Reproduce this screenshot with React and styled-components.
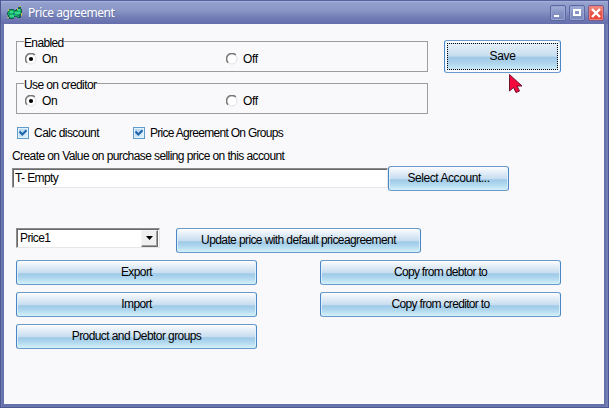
import React from 'react';
import styled, { createGlobalStyle } from 'styled-components';

const GlobalStyle = createGlobalStyle`
  * { box-sizing: border-box; }
  body { margin: 0; overflow: hidden; }
`;

const Window = styled.div`
  position: relative;
  display: flex;
  flex-direction: column;
  width: 609px;
  height: 408px;
  padding: 0 4px 3px 3px;
  border: solid #4d5790;
  border-width: 0 1px 1px;
  background: #6771ac;
  box-shadow: inset 1px 0 #737db5, inset -2px 0 #7580b7, inset 0 -1px #6c76b0;
  font-family: "Liberation Sans", Arial, sans-serif;
  font-size: 12px;
  color: #000;
`;

const TitleBar = styled.header`
  display: flex;
  align-items: center;
  flex: none;
  height: 24px;
  margin: 0 -4px 0 -3px;
  padding: 2px 4px 0 5px;
  border-top: 1px solid #59629f;
  border-bottom: 1px solid #666fac;
  background: linear-gradient(#a7b2dc 0, #929fcd 2px, #8b98c7 9px, #747eb6 16px, #6770ae 22px);
`;

const Title = styled.h1`
  flex: 1;
  margin: -1px 0 0 5px;
  font: 400 12px/16px "Noto Sans", "Open Sans", sans-serif;
  letter-spacing: -0.44px;
  color: #fff;
  text-shadow: 1px 1px #6975ab;
`;

const Controls = styled.div`
  display: flex;
  gap: 3px;
`;

const ControlButton = styled.button`
  width: 16px;
  height: 16px;
  padding: 0;
  border: 1px solid ${p => (p.$close ? '#7b5b8e' : '#5c66a0')};
  border-radius: 2px;
  background: ${p => (p.$close
    ? 'linear-gradient(#f3968b, #e65349 50%, #ed4136)'
    : 'linear-gradient(#a4b0da, #8591c2 50%, #7986bb)')};
  box-shadow: inset 0 0 0 1px ${p => (p.$close ? '#ee8078' : '#98a4d0')};

  svg { display: block; }
`;

const Client = styled.main`
  flex: 1;
  padding: 13px 8px 0;
  background: #f9f9fc;
`;

const TopRow = styled.div`
  display: flex;
  align-items: flex-start;
  gap: 16px;
  padding-left: 4px;
`;

const Groups = styled.div`
  display: grid;
  gap: 7px;
  width: 412px;
`;

const Group = styled.fieldset`
  height: 35px;
  min-width: 0;
  margin: 0;
  padding: 0 0 0 8px;
  border: 1px solid #9d9d9f;
`;

const Legend = styled.legend`
  height: 9px;
  margin-left: -1px;
  padding: 0;
  line-height: 12px;

  span {
    display: block;
    line-height: 12px;
  }
`;

const Choices = styled.div`
  display: grid;
  grid-template-columns: 201px 1fr;
  padding-top: 6px;
`;

const Choice = styled.label`
  display: flex;
  align-items: center;
  gap: ${p => p.$gap || 5}px;
  height: 14px;
`;

const Text = styled.span`
  letter-spacing: ${p => p.$track || 0}px;
  line-height: 14px;
  white-space: nowrap;
`;

const Button = styled.button`
  flex: none;
  width: ${p => p.$width}px;
  height: ${p => p.$height || 25}px;
  margin: 0;
  padding: 0 0 1px;
  border: 1px solid #6b99cb;
  border-left-color: #4c85c3;
  border-right-color: #4c85c3;
  border-radius: 3px;
  background: linear-gradient(#fdfeff 0, #e2edf7 24%, #c8def0 50%, #9fc9e7 56%, #add5ed 72%, #d3f1fa 100%);
  box-shadow: inset 1px 0 rgba(225, 244, 253, 0.8), inset -1px 0 rgba(225, 244, 253, 0.8);
  font: inherit;
  color: #000;
`;

const SaveButton = styled(Button)`
  margin-top: 3px;
  padding: 2px;
  background: #fafcff;
`;

const Focus = styled.span`
  display: flex;
  align-items: center;
  justify-content: center;
  height: 100%;
  padding-bottom: 1px;
  border: 1px dotted #000;
  background: linear-gradient(#e5eff8 0, #c6ddef 48%, #9fc8e7 53%, #add4ec 75%, #c5e8f6 100%);
`;

const Checks = styled.div`
  display: grid;
  grid-template-columns: 116px 1fr;
  margin-top: 12px;
  padding-left: 5px;
`;

const CheckBox = styled.span`
  display: flex;
  width: 12px;
  height: 12px;
  border: 1px solid #609bcb;
  background: linear-gradient(135deg, #a9cfed, #e7f6fd);
  box-shadow: inset 0 0 0 1px #e3f3fc;
`;

const AccountLabel = styled.div`
  height: 14px;
  margin-top: 9px;
`;

const AccountRow = styled.div`
  display: flex;
  align-items: center;
  margin-top: 3px;
`;

const Field = styled.div`
  display: flex;
  align-items: center;
  width: 376px;
  height: 20px;
  margin-top: -1px;
  padding-left: 2px;
  border: 1px solid;
  border-color: #8c8c8c #e6e6e8 #e6e6e8 #8c8c8c;
  background: #fff;
  box-shadow: inset 1px 1px #696969;
`;

const PriceRow = styled.div`
  display: flex;
  gap: 16px;
  margin-top: 37px;
  padding-left: 4px;
`;

const Combo = styled.div`
  display: flex;
  align-items: center;
  justify-content: space-between;
  width: 144px;
  height: 20px;
  padding: 1px 1px 1px 3px;
  border: 1px solid;
  border-color: #8c8c8c #e6e6e8 #e6e6e8 #8c8c8c;
  background: #fff;
  box-shadow: inset 1px 1px #696969;
`;

const DropButton = styled.span`
  display: grid;
  place-items: center;
  width: 17px;
  height: 17px;
  border: 1px solid;
  border-color: #f5f5f5 #696969 #696969 #f5f5f5;
  background: #f0f0f0;
  box-shadow: inset -1px -1px #a0a0a0;
`;

const Actions = styled.div`
  display: grid;
  grid-template-columns: 241px 241px;
  gap: 7px 63px;
  margin-top: 7px;
  padding-left: 4px;
`;

const Cursor = styled.svg`
  position: absolute;
  left: 506px;
  top: 73px;
`;

const AppIcon = () => (
  <svg width="17" height="16" viewBox="0 0 17 16" shapeRendering="crispEdges">
    <path d="M2 6h1V4h5v1h2V4h2V2h3v2h1v6h-1v3h-4v-1H8v2H3v-2H2v-2H1V7h1z" fill="#176058" />
    <path d="M3 5h5v1h3V4h4v5h-2v3h-2v-1H8v2H4v-1H3v-2H2V7h1z" fill="#18ae5e" />
    <path d="M4 6h3v2H4zM9 7h5v2H9zM4 10h4v2H4zM12 4h2v2h-2z" fill="#35d78c" />
    <path d="M7 8h2v2H7zM11 10h2v1h-2zM3 8h1v2H3z" fill="#148a83" />
    <path d="M2 4h1v2H2zM13 1h2v1h-2zM15 8h1v3h-1zM1 12h2v1H1zM11 3h1v2h-1z" fill="#c9b74b" />
  </svg>
);

const Radio = ({ on }) => (
  <svg width="12" height="12" viewBox="0 0 12 12">
    <circle cx="6" cy="6" r="5" fill="#fff" stroke="#e2e2e4" />
    <path d="M2.1 9.8A5.2 5.2 0 0 1 9.8 2" fill="none" stroke="#777" strokeWidth="1.5" />
    {on && <circle cx="6" cy="6" r="2.1" fill="#000" />}
  </svg>
);

const Check = () => (
  <svg width="10" height="10" viewBox="0 0 10 10">
    <path d="M1.5 3.5 4.3 6.5 8.5 2.3" fill="none" stroke="#2166ad" strokeWidth="2.2" />
  </svg>
);

const RadioGroup = ({ label, track }) => (
  <Group>
    <Legend><Text $track={track}>{label}</Text></Legend>
    <Choices>
      <Choice><Radio on /><Text $track={-0.4}>On</Text></Choice>
      <Choice><Radio /><Text $track={-0.4}>Off</Text></Choice>
    </Choices>
  </Group>
);

const Checked = ({ label, track }) => (
  <Choice $gap={5}>
    <CheckBox><Check /></CheckBox>
    <Text $track={track}>{label}</Text>
  </Choice>
);

const actions = [
  ['Export', -0.6],
  ['Copy from debtor to', -0.68],
  ['Import', -0.58],
  ['Copy from creditor to', -0.67],
  ['Product and Debtor groups', -0.58],
];

export default function App() {
  return (
    <>
      <GlobalStyle />
      <Window>
        <TitleBar>
          <AppIcon />
          <Title>Price agreement</Title>
          <Controls>
            <ControlButton aria-label="Minimize">
              <svg width="14" height="14"><path d="M3 9h5v2H3z" fill="#fff" /></svg>
            </ControlButton>
            <ControlButton aria-label="Maximize">
              <svg width="14" height="14"><path d="M3 3h8v7H3zM5 5v3h4V5z" fill="#fff" fillRule="evenodd" /></svg>
            </ControlButton>
            <ControlButton $close aria-label="Close">
              <svg width="14" height="14"><path d="m3 3 8 8M11 3l-8 8" stroke="#fff" strokeWidth="2.4" /></svg>
            </ControlButton>
          </Controls>
        </TitleBar>
        <Client>
          <TopRow>
            <Groups>
              <RadioGroup label="Enabled" track={-0.65} />
              <RadioGroup label="Use on creditor" track={-0.6} />
            </Groups>
            <SaveButton $width={117} $height={33}><Focus><Text $track={-0.3}>Save</Text></Focus></SaveButton>
          </TopRow>
          <Checks>
            <Checked label="Calc discount" track={-0.54} />
            <Checked label="Price Agreement On Groups" track={-0.71} />
          </Checks>
          <AccountLabel>
            <Text $track={-0.59}>Create on Value on purchase selling price on this account</Text>
          </AccountLabel>
          <AccountRow>
            <Field><Text $track={-0.6}>T- Empty</Text></Field>
            <Button $width={121}><Text $track={-0.42}>Select Account...</Text></Button>
          </AccountRow>
          <PriceRow>
            <Combo>
              <Text $track={-0.62}>Price1</Text>
              <DropButton><svg width="7" height="4"><path d="M0 0h7L3.5 4z" /></svg></DropButton>
            </Combo>
            <Button $width={245}><Text $track={-0.6}>Update price with default priceagreement</Text></Button>
          </PriceRow>
          <Actions>
            {actions.map(([label, track]) => (
              <Button key={label} $width={241}><Text $track={track}>{label}</Text></Button>
            ))}
          </Actions>
        </Client>
        <Cursor width="17" height="23" viewBox="0 0 17 23">
          <path d="M2.5 1.5v16.5l4-3.5 2.5 5 3.5-1.5-2.5-5h5z" fill="#f5083c" stroke="#73102d" strokeWidth="1" />
        </Cursor>
      </Window>
    </>
  );
}
